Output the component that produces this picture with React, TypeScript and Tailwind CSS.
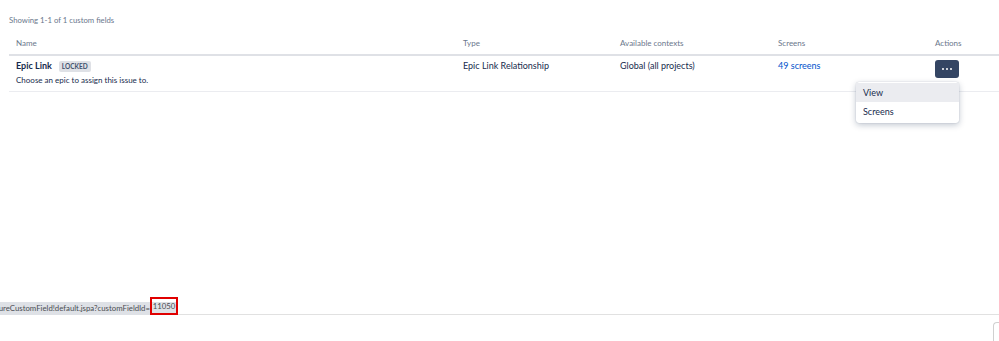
const columns = [
  { label: 'Name', width: 'w-[447px]' },
  { label: 'Type', width: 'w-[157px]' },
  { label: 'Available contexts', width: 'w-[158px]' },
  { label: 'Screens', width: 'w-[157px]' },
  { label: 'Actions', width: 'flex-1' },
];

const App = () => {
  return (
    <div className="h-[341px] w-[999px] overflow-hidden bg-white flex flex-col font-['Lato',sans-serif] text-[#172b4d]">
      <div className="flex-1 pl-[9px] pt-[13px]">
        <p className="text-[7.75px] leading-[14px] text-[#6b778c]">Showing 1-1 of 1 custom fields</p>

        <div className="mt-[10px]">
          <div className="flex h-[19px] items-start border-b-2 border-[#dfe1e6]">
            {columns.map((col) => (
              <div key={col.label} className={`${col.width} px-[7px] text-[8px] leading-[12px] text-[#6b778c]`}>
                {col.label}
              </div>
            ))}
          </div>

          <div className="flex h-[36px] border-b border-[#ebecf0] pt-[3px]">
            <div className="w-[447px] px-[7px]">
              <div className="flex h-[14px] items-center gap-x-[7px]">
                <span className="text-[9px] font-bold leading-[14px]">Epic Link</span>
                <span className="rounded-[2px] bg-[#dfe1e6] px-[3px] text-[6.5px] font-bold leading-[11px] text-[#42526e]">LOCKED</span>
              </div>
              <p className="text-[8px] leading-[14px] text-[#172b4d]">Choose an epic to assign this issue to.</p>
            </div>
            <div className="w-[157px] px-[7px] text-[9px] leading-[14px]">Epic Link Relationship</div>
            <div className="w-[158px] px-[7px] text-[9px] leading-[14px]">Global (all projects)</div>
            <div className="w-[157px] px-[7px] text-[9px] leading-[14px] text-[#0052cc]">49 screens</div>
            <div className="flex-1 px-[7px] pt-[1px]">
              <div className="relative w-[24px]">
                <button className="flex h-[18px] w-[24px] items-center justify-center gap-[1.5px] rounded-[3px] bg-[#344563]">
                  <span className="size-[2.5px] rounded-full bg-white" />
                  <span className="size-[2.5px] rounded-full bg-white" />
                  <span className="size-[2.5px] rounded-full bg-white" />
                </button>
                <div className="absolute right-0 top-[22px] w-[103px] rounded-[3px] bg-white py-[1px] shadow-[0_2px_6px_rgba(9,30,66,0.25),0_0_1px_rgba(9,30,66,0.31)]">
                  <div className="h-[19px] bg-[#ebecf0] px-[7px] text-[9px] leading-[19px] text-[#172b4d]">View</div>
                  <div className="h-[20px] px-[7px] text-[9px] leading-[20px] text-[#172b4d]">Screens</div>
                </div>
              </div>
            </div>
          </div>
        </div>
      </div>

      <div className="flex h-[18px] items-end">
        <div className="flex h-[13px] items-center bg-[#dee1e6] text-[7.8px] leading-[13px] text-[#4a4d52] whitespace-nowrap">
          <span className="flex w-[150px] justify-end overflow-hidden">ureCustomField!default.jspa?customFieldId=</span>
          <span className="-mt-[5px] flex h-[18px] w-[28px] items-end justify-center border-2 border-[#e00000]">11050</span>
        </div>
        <div className="flex-1 border-b border-[#e1e1e1]" />
      </div>

      <div className="flex h-[26px] justify-end pt-[7px]">
        <div className="h-full w-[6px] rounded-tl-[4px] border-l border-t border-[#d0d0d0]" />
      </div>
    </div>
  );
};

export default App;
